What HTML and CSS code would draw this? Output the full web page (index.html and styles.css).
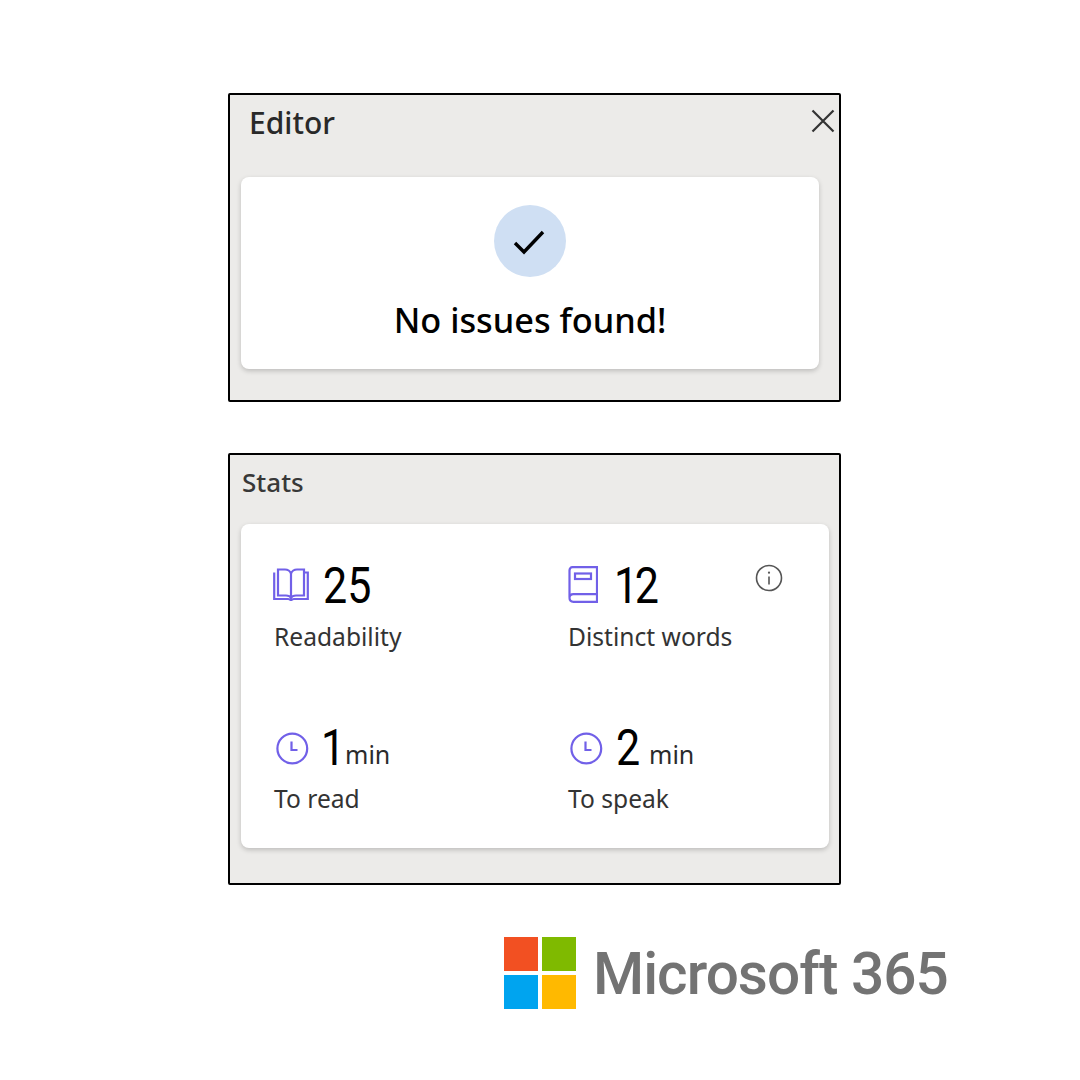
FILE: index.html
```html
<!DOCTYPE html>
<html lang="en">
<head>
<meta charset="utf-8">
<title>Editor stats</title>
<link rel="stylesheet" href="styles.css">
</head>
<body>
<main class="page">
  <section class="panel panel-editor">
    <header class="editor-head">
      <h2 class="editor-title">Editor</h2>
      <svg class="close" viewBox="0 0 24 24" width="24" height="24" aria-hidden="true"><path d="M1.5 1.5 22.5 22.5M22.5 1.5 1.5 22.5"/></svg>
    </header>
    <div class="card card-editor">
      <div class="check-circle">
        <svg viewBox="0 0 32 26" width="32" height="26" aria-hidden="true"><path d="M2 14 11 23 30 3"/></svg>
      </div>
      <p class="no-issues">No issues found!</p>
    </div>
  </section>

  <section class="panel panel-stats">
    <h2 class="stats-title">Stats</h2>
    <div class="card card-stats">
      <svg class="info" viewBox="0 0 28 28" width="28" height="28" aria-hidden="true"><circle cx="14" cy="14" r="12.5"/><path d="M14 12.5v8"/><circle class="dot" cx="14" cy="8.7" r="1.1"/></svg>
      <div class="stat">
        <div class="stat-main">
          <svg class="icon icon-open" viewBox="0 0 36 33" width="36" height="33" aria-hidden="true"><path d="M1.2 4.5V31H15c1.5 0 2.3.6 3 1.5.7-.9 1.5-1.5 3-1.5h13.800V4.500H31M5 1.500V27.500H13c2.500 0 4.200.8 5 2.200V5.500C17 3 15 1.500 12 1.500ZM31 1.500V27.500H23c-2.500 0-4.200.8-5 2.200V5.500C19 3 21 1.500 24 1.500Z"/></svg>
          <span class="num num-two">25</span>
        </div>
        <div class="label">Readability</div>
      </div>
      <div class="stat">
        <div class="stat-main">
          <svg class="icon icon-closed" viewBox="0 0 30 37" width="30" height="37" aria-hidden="true"><path d="M1.500 31V4.500C1.500 2.500 2.500 1.200 4.500 1.200H29V35.800H5.500C3 35.800 1.500 34 1.500 31.800C1.500 29.500 3 28.200 5.500 28.200H29"/><rect x="7" y="7.500" width="16" height="5.500"/></svg>
          <span class="num num-two num-tight">12</span>
        </div>
        <div class="label">Distinct words</div>
      </div>
      <div class="stat">
        <div class="stat-main">
          <svg class="icon icon-clock" viewBox="0 0 33 33" width="33" height="33" aria-hidden="true"><circle cx="16.300" cy="16.500" r="14.900"/><path d="M15.500 9.500V18H21.500"/></svg>
          <span class="num num-narrow">1</span><span class="unit">min</span>
        </div>
        <div class="label">To read</div>
      </div>
      <div class="stat">
        <div class="stat-main">
          <svg class="icon icon-clock" viewBox="0 0 33 33" width="33" height="33" aria-hidden="true"><circle cx="16.300" cy="16.500" r="14.900"/><path d="M15.500 9.500V18H21.500"/></svg>
          <span class="num num-one">2</span><span class="unit">min</span>
        </div>
        <div class="label">To speak</div>
      </div>
    </div>
  </section>

  <footer class="brand">
    <svg class="ms-logo" viewBox="0 0 72 72" width="72" height="72" aria-hidden="true">
      <rect width="34" height="34" fill="#f25022"/>
      <rect x="38" width="34" height="34" fill="#7fba00"/>
      <rect y="38" width="34" height="34" fill="#00a4ef"/>
      <rect x="38" y="38" width="34" height="34" fill="#ffb900"/>
    </svg>
    <span class="brand-name">Microsoft 365</span>
  </footer>
</main>
</body>
</html>
```

FILE: styles.css
```css
* { box-sizing: border-box; }
html, body { margin: 0; padding: 0; background: #fff; }
body { font-family: "Noto Sans", "Open Sans", sans-serif; color: #2b2b2b; }

.page { width: 1080px; height: 1080px; padding: 93px 0 0 228px; overflow: hidden; }

.panel { width: 613px; background: #ecebe9; border: 2px solid #000; border-radius: 2px; }
.panel-editor { height: 309px; padding: 0 0 0 11px; }
.panel-stats { height: 432px; margin-top: 51px; padding: 0 0 0 11px; }

.card { background: #fff; border-radius: 8px; box-shadow: 0 2px 5px rgba(0,0,0,.2); }

.editor-head { height: 82px; display: flex; align-items: flex-start; justify-content: space-between; padding: 8px 4px 0 8px; }
.editor-title { margin: 0; font-size: 30px; line-height: 40px; font-weight: 500; color: #292929; }
.close { margin-top: 6px; fill: none; stroke: #333; stroke-width: 2.200; }

.card-editor { width: 578px; height: 192px; padding-top: 28px; display: flex; flex-direction: column; align-items: center; }
.check-circle { width: 72px; height: 72px; border-radius: 50%; background: #cfdff3; display: flex; align-items: center; justify-content: center; }
.check-circle svg { fill: none; stroke: #000; stroke-width: 3.400; margin: 2px 2px 0 0; }
.no-issues { margin: 18px 0 0; font-size: 34.300px; line-height: 50px; font-weight: 500; color: #000; }

.stats-title { margin: 0; height: 69px; padding: 9px 0 0 1px; font-size: 26px; line-height: 36px; font-weight: 500; color: #383838; }

.card-stats { position: relative; width: 588px; height: 324px; padding: 40px 0 0 33px; display: grid; grid-template-columns: 294px 294px; grid-template-rows: 162px 162px; }
.info { position: absolute; left: 514px; top: 40px; fill: none; stroke: #555; stroke-width: 1.600; }
.info .dot { fill: #555; stroke: none; }

.stat-main { height: 44px; display: flex; align-items: center; }
.icon { flex: none; fill: none; stroke: #7160e8; stroke-width: 2.200; }
.icon-open { margin: 0 14px 3px -1px; }
.icon-closed { margin: 0 17px 3px 0; }
.icon-clock { margin: 0 13px 0 2px; }
.num { display: inline-block; font-family: "Roboto", sans-serif; font-weight: 450; font-size: 50px; line-height: 44px; color: #000; transform: scaleX(.86); transform-origin: 0 50%; white-space: nowrap; }
.num-two { width: 48px; }
.num-tight { letter-spacing: -4px; margin-left: -1px; }
.num-one { width: 24px; }
.num-narrow { width: 15px; margin-left: -1px; }
.unit { font-size: 25px; line-height: 44px; margin: 12px 0 0 9px; color: #2b2b2b; }
.label { margin-top: 12px; font-size: 24.600px; line-height: 34px; color: #333; }

.brand { display: flex; align-items: center; width: 720px; margin: 52px 0 0 276px; }
.ms-logo { flex: none; }
.brand-name { margin-left: 17px; font-family: "Roboto", sans-serif; font-size: 60px; line-height: 72px; font-weight: 500; letter-spacing: -1px; color: #737373; white-space: nowrap; transform: translateY(1px) scaleX(.975); transform-origin: 0 50%; }
```
